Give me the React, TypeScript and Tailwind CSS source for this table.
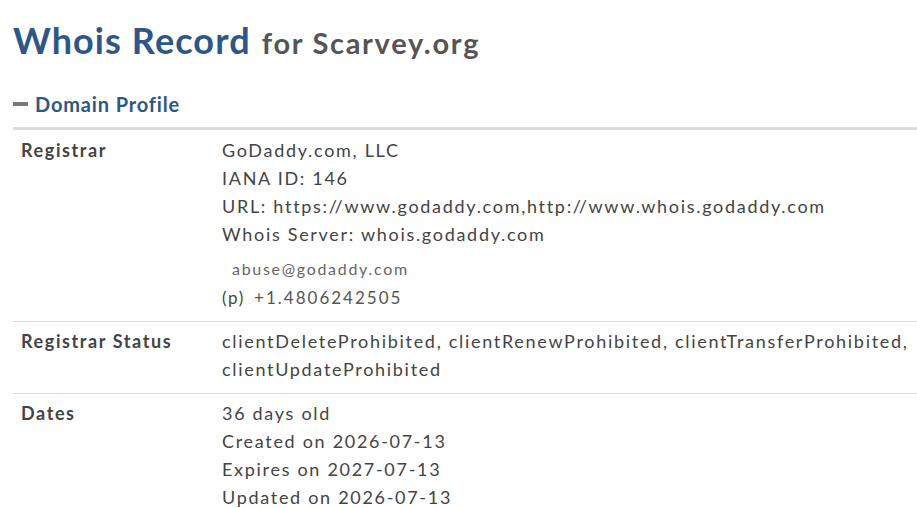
export default function App() {
  const rows = [
    { label: "Registrar", kind: "registrar" },
    { label: "Registrar Status", kind: "status" },
    { label: "Dates", kind: "dates" },
  ];

  return (
    <div
      className="min-h-screen bg-white pl-[13px] text-[18px] leading-[28px] tracking-[1.7px] text-[#444]"
      style={{ fontFamily: "Lato, 'Open Sans', sans-serif" }}
    >
      <h1 className="pt-[18px] font-bold leading-[44px]">
        <span className="text-[36px] tracking-[1.1px] text-[#2d5787]">Whois Record</span>
        <span className="ml-[11px] text-[29px] tracking-[1.7px] text-[#555]">for Scarvey.org</span>
      </h1>

      <div className="mt-[22px] flex items-center gap-[7px] pb-[10px]">
        <span className="h-[4px] w-[15px] bg-[#777]" />
        <span className="text-[20px] font-bold leading-[26px] tracking-[0.85px] text-[#2d5787]">
          Domain Profile
        </span>
      </div>
      <div className="h-[3px] bg-[#dddddd]" />

      {rows.map((row, i) => (
        <div
          key={row.label}
          className={
            "flex " +
            (i === 0 ? "pt-[6px] pb-[9px]" : "pt-[5px] pb-[10px] border-t border-[#dddddd]")
          }
        >
          <div className="w-[209px] shrink-0 pl-[8px] font-bold tracking-[1.6px] text-[#444]">
            {row.label}
          </div>
          <div className="text-[#444]">
            {row.kind === "registrar" && (
              <>
                <div>GoDaddy.com, LLC</div>
                <div>IANA ID: 146</div>
                <div>URL: https://www.godaddy.com,http://www.whois.godaddy.com</div>
                <div>Whois Server: whois.godaddy.com</div>
                <div className="mt-[7px] pl-[10px] text-[16px] text-[#666]">
                  abuse@godaddy.com
                </div>
                <div className="mt-[1px] flex items-baseline">
                  <span className="text-[17px]">(p)</span>
                  <span className="ml-[9px] text-[17px] tracking-[2px] text-[#555]">+1.4806242505</span>
                </div>
              </>
            )}
            {row.kind === "status" && (
              <div>
                clientDeleteProhibited, clientRenewProhibited, clientTransferProhibited,
                clientUpdateProhibited
              </div>
            )}
            {row.kind === "dates" && (
              <>
                <div>36 days old</div>
                <div>Created on 2026-07-13</div>
                <div>Expires on 2027-07-13</div>
                <div>Updated on 2026-07-13</div>
              </>
            )}
          </div>
        </div>
      ))}
    </div>
  );
}
